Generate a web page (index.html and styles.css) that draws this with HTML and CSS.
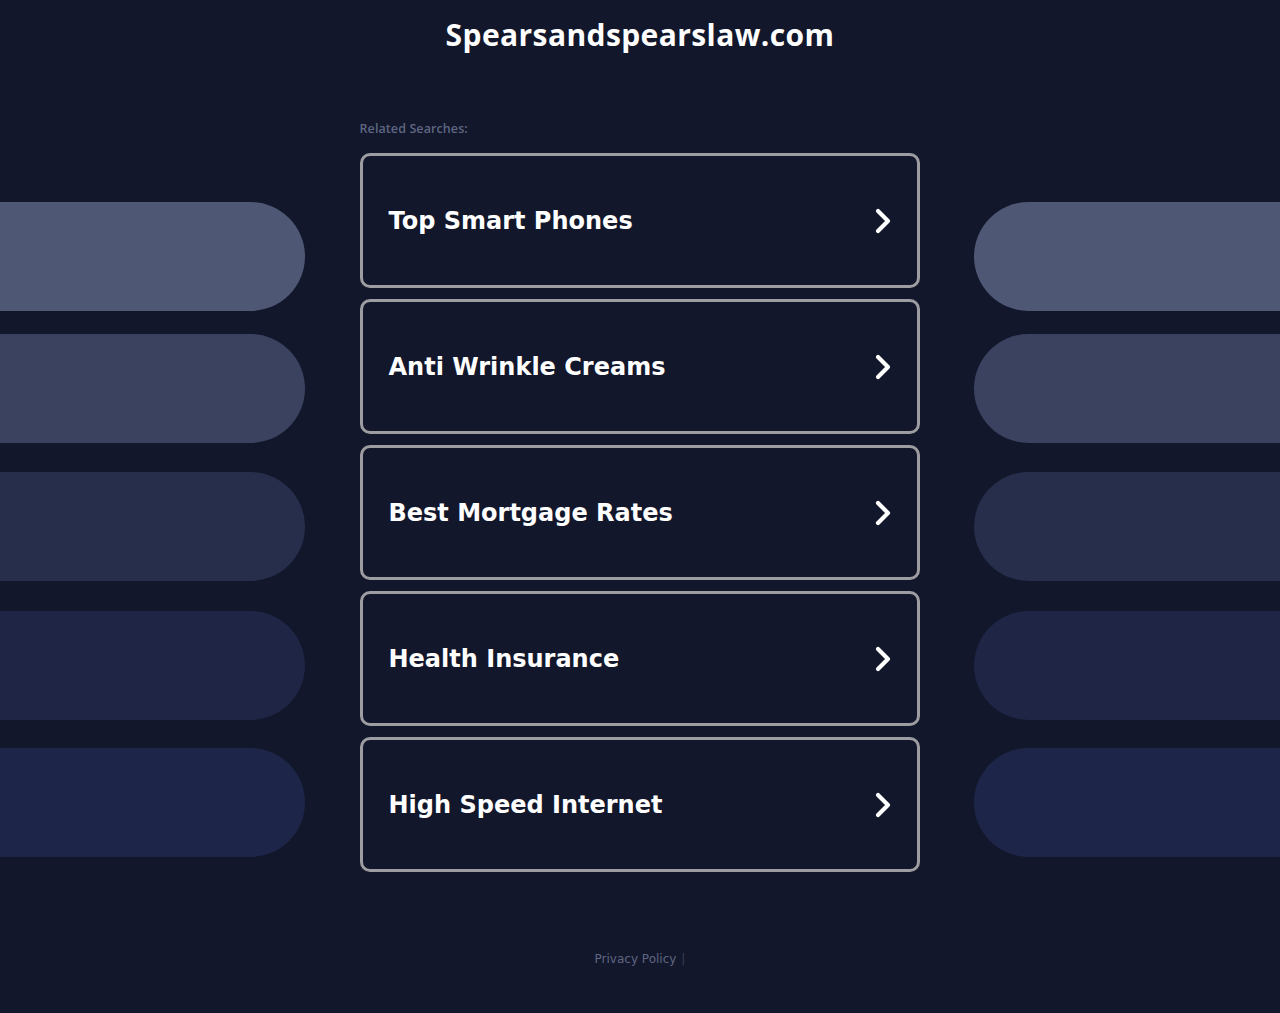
FILE: index.html
```html
<!DOCTYPE html>
<html>
<head>
<meta charset="utf-8">
<link rel="stylesheet" href="styles.css">
</head>
<body>
<div class="page">
  <header class="header"><h1 class="title">Spearsandspearslaw.com</h1></header>
  <div class="stage">
    <div class="side side-left">
      <div class="pill p1"></div>
      <div class="pill p2"></div>
      <div class="pill p3"></div>
      <div class="pill p4"></div>
      <div class="pill p5"></div>
    </div>
    <main class="center">
      <div class="related">Related Searches:</div>
      <div class="list">
        <a class="card" href="#"><span class="label">Top Smart Phones</span><svg class="chev" viewBox="0 0 20 28" width="20" height="28"><path d="M5 4 L15 14 L5 24" fill="none" stroke="#fff" stroke-width="4.2" stroke-linecap="round" stroke-linejoin="round"/></svg></a>
        <a class="card" href="#"><span class="label">Anti Wrinkle Creams</span><svg class="chev" viewBox="0 0 20 28" width="20" height="28"><path d="M5 4 L15 14 L5 24" fill="none" stroke="#fff" stroke-width="4.2" stroke-linecap="round" stroke-linejoin="round"/></svg></a>
        <a class="card" href="#"><span class="label">Best Mortgage Rates</span><svg class="chev" viewBox="0 0 20 28" width="20" height="28"><path d="M5 4 L15 14 L5 24" fill="none" stroke="#fff" stroke-width="4.2" stroke-linecap="round" stroke-linejoin="round"/></svg></a>
        <a class="card" href="#"><span class="label">Health Insurance</span><svg class="chev" viewBox="0 0 20 28" width="20" height="28"><path d="M5 4 L15 14 L5 24" fill="none" stroke="#fff" stroke-width="4.2" stroke-linecap="round" stroke-linejoin="round"/></svg></a>
        <a class="card" href="#"><span class="label">High Speed Internet</span><svg class="chev" viewBox="0 0 20 28" width="20" height="28"><path d="M5 4 L15 14 L5 24" fill="none" stroke="#fff" stroke-width="4.2" stroke-linecap="round" stroke-linejoin="round"/></svg></a>
      </div>
    </main>
    <div class="side side-right">
      <div class="pill p1"></div>
      <div class="pill p2"></div>
      <div class="pill p3"></div>
      <div class="pill p4"></div>
      <div class="pill p5"></div>
    </div>
  </div>
  <footer class="footer"><a class="privacy" href="#">Privacy Policy</a><span class="sep">|</span></footer>
</div>
</body>
</html>
```
FILE: styles.css
```css
html, body {
  margin: 0;
  padding: 0;
  background: #12172b;
}
.page {
  width: 1280px;
  min-height: 1013px;
  display: flex;
  flex-direction: column;
}
.header {
  height: 70px;
  display: flex;
  justify-content: center;
  align-items: flex-start;
}
.title {
  margin: 14px 0 0;
  font-family: "Open Sans", "Liberation Sans", sans-serif;
  font-weight: 700;
  font-size: 30px;
  line-height: 42px;
  color: #ffffff;
  letter-spacing: 0.4px;
}
.stage {
  display: grid;
  grid-template-columns: 305px 1fr 306px;
}
.side {
  display: flex;
  flex-direction: column;
  padding-top: 132px;
}
.pill {
  height: 109px;
}
.side-left .pill { border-radius: 0 55px 55px 0; }
.side-right .pill { border-radius: 55px 0 0 55px; }
.pill.p1 { background: #4e5774; }
.pill.p2 { background: #3a4260; margin-top: 23px; }
.pill.p3 { background: #262e4b; margin-top: 29px; }
.pill.p4 { background: #1e2545; margin-top: 30px; }
.pill.p5 { background: #1d2648; margin-top: 28px; }
.center {
  display: flex;
  flex-direction: column;
  align-items: center;
}
.related {
  width: 560px;
  margin-top: 51px;
  font-family: "Open Sans", "Liberation Sans", sans-serif;
  font-weight: 600;
  font-size: 12.5px;
  letter-spacing: 0.1px;
  line-height: 16px;
  color: #5f6682;
}
.list {
  margin-top: 16px;
  display: flex;
  flex-direction: column;
  gap: 11px;
}
.card {
  box-sizing: border-box;
  width: 560px;
  height: 135px;
  border: 3px solid #9c9ca1;
  border-radius: 10px;
  background: #12172b;
  display: flex;
  align-items: center;
  justify-content: space-between;
  padding: 0 24px 0 26px;
  text-decoration: none;
}
.label {
  font-family: "DejaVu Sans", sans-serif;
  font-weight: 700;
  font-size: 24px;
  color: #ffffff;
}
.chev { display: block; }
.footer {
  margin-top: 79px;
  display: flex;
  justify-content: center;
  gap: 5px;
  font-family: "DejaVu Sans", sans-serif;
  font-size: 12px;
  line-height: 16px;
}
.privacy { color: #5f6682; text-decoration: none; }
.sep { color: #3a4058; }
```
